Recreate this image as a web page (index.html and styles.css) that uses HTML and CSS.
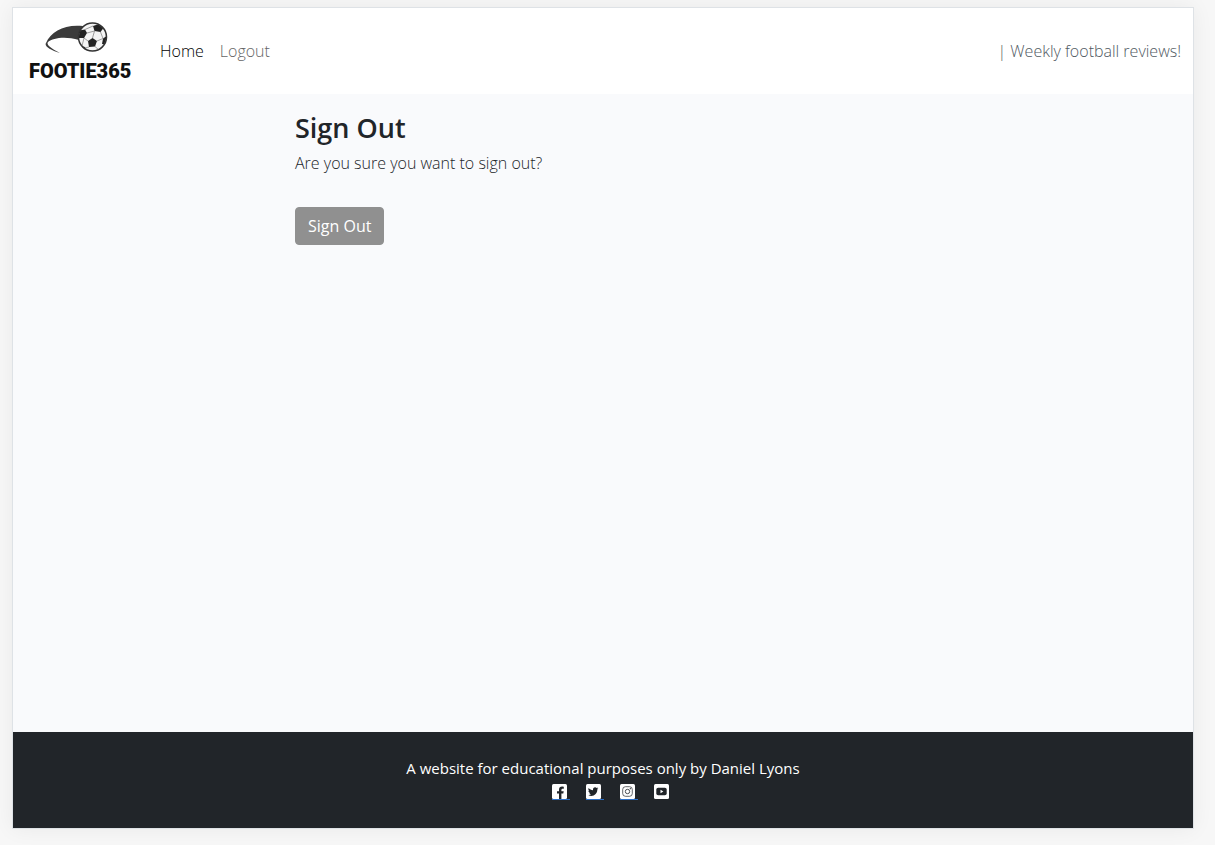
FILE: index.html
```html
<!DOCTYPE html>
<html lang="en">
<head>
<meta charset="utf-8">
<meta name="viewport" content="width=device-width, initial-scale=1">
<title>Footie365 - Sign Out</title>
<link rel="stylesheet" href="styles.css">
</head>
<body>
<div class="page">
  <header class="navbar">
    <a class="brand" href="#">
      <svg class="brand-mark" viewBox="0 0 64 34" aria-hidden="true">
        <defs><clipPath id="ball"><circle cx="47.5" cy="16" r="13.600"/></clipPath></defs>
        <path d="M1 22C6 10 20 3 38 5L34 19C20 15 8 17 3 21C1.500 23 3 26 15 32C5 29 -1 25 1 22Z" fill="#3b3b3b"/>
        <circle cx="47.500" cy="16" r="14" fill="#f4f4f4" stroke="#333" stroke-width="1.500"/>
        <g clip-path="url(#ball)" fill="#222">
          <path d="M48 5L54 3L58.500 7L55.500 11L49.500 10Z"/>
          <path d="M34 9.500L40 8.500L42 12L39 17L34 17Z"/>
          <path d="M43 20L47.500 17L52 20L50 25.500L44 26Z"/>
          <path d="M58 17.500L63 14L63 24L57 23Z"/>
          <path d="M36 25L40 26L42 31L36 30Z"/>
          <path d="M40 8.500L48 5M42 12L49.500 10M39 17L43 20M55.500 11L58 17.500M47.500 17L49.500 10M52 20L58 17.500M44 26L40 27M50 25.500L54 29M39 17L37 25" fill="none" stroke="#777" stroke-width=".7"/>
        </g>
      </svg>
      <span class="brand-name">FOOTIE365</span>
    </a>
    <nav class="nav">
      <a class="nav-link active" href="#">Home</a>
      <a class="nav-link" href="#">Logout</a>
    </nav>
    <span class="tagline">| Weekly football reviews!</span>
  </header>
  <main class="main">
    <form class="content">
      <h1 class="title">Sign Out</h1>
      <p class="prompt">Are you sure you want to sign out?</p>
      <button class="btn" type="submit">Sign Out</button>
    </form>
  </main>
  <footer class="footer">
    <p class="credit">A website for educational purposes only by Daniel Lyons</p>
    <div class="social">
      <a class="social-link" href="#" aria-label="Facebook"><svg class="icon" viewBox="0 0 15 15"><rect width="15" height="15" rx="1.500" fill="#fff"/><path d="M7 15V9.500H5V7.200H7V5.800C7 3.700 8.200 2.600 10.100 2.600L11.800 2.700V4.700H10.700C9.700 4.700 9.400 5.300 9.400 6V7.200H11.700L11.300 9.500H9.400V15Z" fill="#212529"/></svg></a>
      <a class="social-link" href="#" aria-label="Twitter"><svg class="icon" viewBox="0 0 15 15"><rect width="15" height="15" rx="1.500" fill="#fff"/><path d="M12.400 4.500L11.300 5.500C11.500 9 8.700 12 5.300 12C4.200 12 3.200 11.700 2.300 11.100C3.300 11.200 4.400 10.900 5.200 10.300C4.300 10.300 3.500 9.700 3.200 8.800H4.100C3.100 8.500 2.400 7.700 2.400 6.700L3.300 6.900C2.300 6.200 2.100 5 2.700 4C3.800 5.300 5.300 6.100 7 6.200C6.500 3.700 9.200 2.500 10.700 4L12.100 3.500L11.200 4.700Z" fill="#212529"/></svg></a>
      <a class="social-link" href="#" aria-label="Instagram"><svg class="icon" viewBox="0 0 15 15"><rect width="15" height="15" rx="1.500" fill="#fff"/><g fill="none" stroke="#212529"><rect x="2.700" y="2.700" width="9.600" height="9.600" rx="2.800" stroke-width=".7"/><circle cx="7.500" cy="7.500" r="2.200" stroke-width=".8"/></g><circle cx="10.300" cy="4.700" r=".6" fill="#212529"/></svg></a>
      <a class="social-link last" href="#" aria-label="YouTube"><svg class="icon" viewBox="0 0 15 15"><rect width="15" height="15" rx="1.500" fill="#fff"/><rect x="2.300" y="3.800" width="10.400" height="7.400" rx="1.800" fill="#212529"/><path d="M6.500 5.800L9.400 7.500L6.500 9.200Z" fill="#fff"/></svg></a>
    </div>
  </footer>
</div>
</body>
</html>
```
FILE: styles.css
```css
* { box-sizing: border-box; }
body {
  margin: 0;
  min-height: 100vh;
  display: flex;
  padding: 7px 21px 16px 12px;
  background: #f7f7f7;
  color: #212529;
  font: 16px/24px "Open Sans", "Noto Sans", sans-serif;
}
.page {
  flex: 1;
  display: flex;
  flex-direction: column;
  background: #f9fafc;
  border: 1px solid #dee2e6;
  box-shadow: 0 0 20px rgba(0, 0, 0, .06);
}
.navbar {
  display: flex;
  align-items: center;
  min-height: 86px;
  padding: 0 12px 0 16px;
  background: #fff;
  font-weight: 300;
}
.brand {
  display: flex;
  flex-direction: column;
  width: 115px;
  padding-top: 4px;
  color: #111;
  text-decoration: none;
}
.brand-mark { width: 64px; height: 34px; margin-left: 16px; }
.brand-name { font: 900 20px/28px Roboto, sans-serif; margin-top: 2px; }
.nav { display: flex; gap: 16px; margin-left: 16px; }
.nav-link { color: #666; text-decoration: none; }
.nav-link.active { color: #000; }
.tagline { margin-left: auto; color: #505962; }
.main { flex: 1; padding: 16px 12px; }
.content { max-width: 616px; margin: 0 auto; }
.title { margin: 0 0 6px; font-size: 27px; line-height: 35px; font-weight: 600; }
.prompt { margin: 0 0 32px; font-weight: 300; }
.btn {
  padding: 6px 12px;
  border: 1px solid #909090;
  border-radius: 4px;
  background: #909090;
  color: #fff;
  font: inherit;
}
.footer {
  padding: 24px 12px;
  background: #212529;
  color: #fff;
  text-align: center;
}
.credit { margin: 0; font-size: 15px; }
.social { display: flex; justify-content: center; gap: 16px; height: 24px; padding: 4px 0 4px 15px; }
.social-link { display: block; width: 18px; height: 16px; border-bottom: 1px solid #2a6fc9; }
.social-link.last { width: 15px; border: 0; }
.icon { display: block; width: 15px; height: 15px; }
```
